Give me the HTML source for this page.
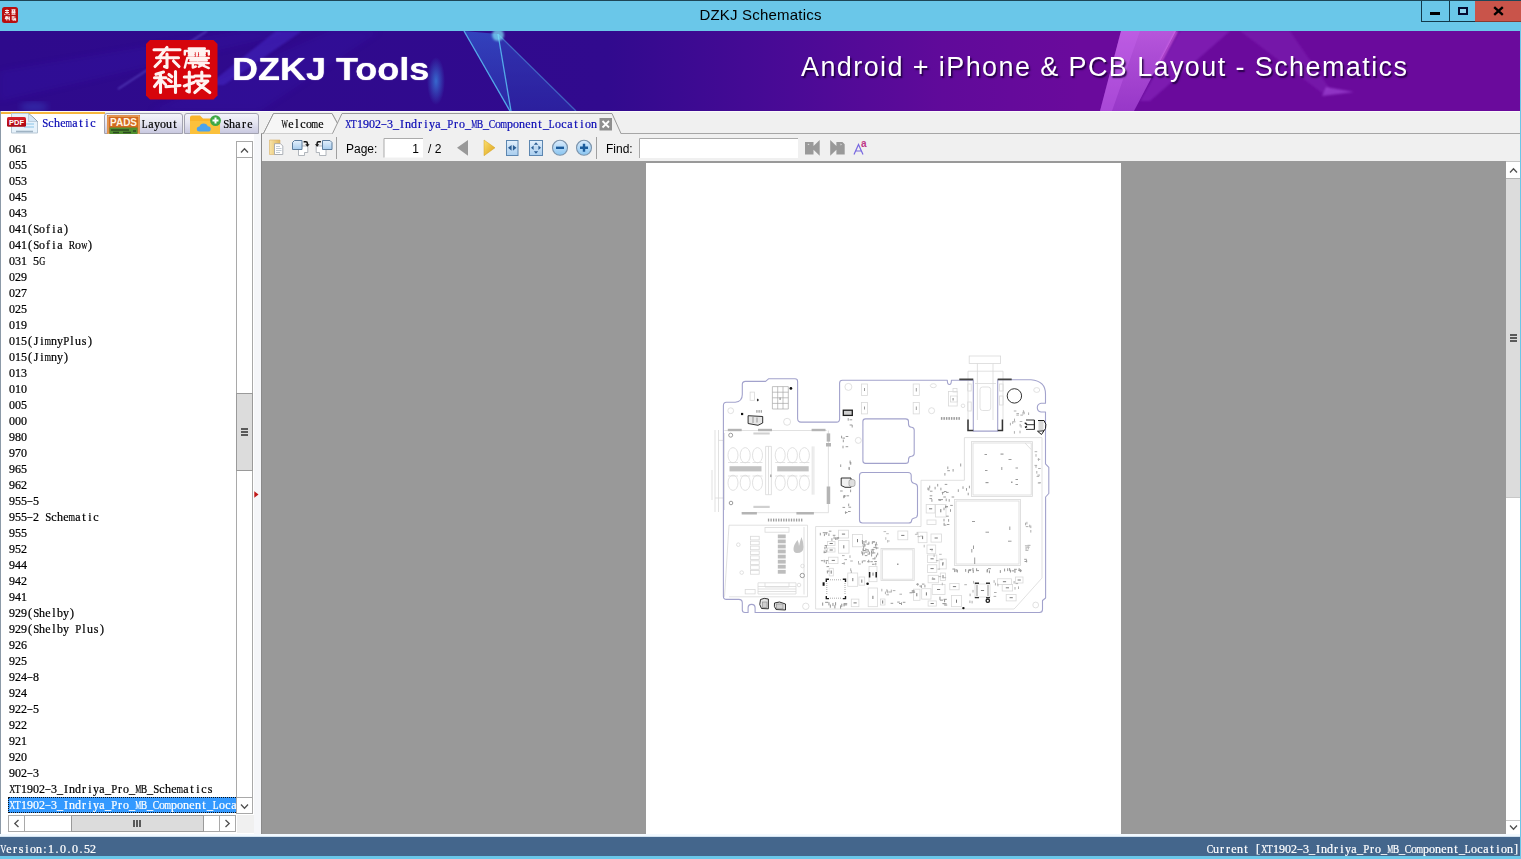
<!DOCTYPE html>
<html>
<head>
<meta charset="utf-8">
<title>DZKJ Schematics</title>
<style>
*{box-sizing:border-box;margin:0;padding:0}
html,body{width:1521px;height:859px;overflow:hidden;background:#6ac7e9;font-family:"Liberation Sans",sans-serif}
.abs{position:absolute}
#win{position:absolute;left:0;top:0;width:1521px;height:859px;background:#6ac7e9;overflow:hidden}
.mono{font-family:"Liberation Serif",serif;font-size:12px;white-space:pre;line-height:16px;opacity:.999;-webkit-text-stroke:.22px currentColor}
.c{display:inline-flex;justify-content:center;width:6px;font-style:normal}
.c b{font-weight:normal;display:block}
.k9{transform:scaleX(.56)}.k7{transform:scaleX(.7)}.k6{transform:scaleX(.8)}.k5{transform:scaleX(.9)}
.dash{position:relative;top:-1px;transform:scaleX(.8)}
/* title bar */
#topline{left:0;top:0;width:1521px;height:1px;background:#1d4657}
#title{opacity:.999;left:0;top:5px;width:1521px;text-align:center;font-size:15px;letter-spacing:.2px;color:#000;line-height:20px}
/* banner */
#banner{left:0;top:31px;width:1520px;height:80px;background:linear-gradient(90deg,#2e0a8c 0%,#310a8e 40%,#4a0a96 52%,#600a9a 62%,#6a0a9c 71%,#6a0a9c 100%);overflow:hidden}
/* client */
#client{left:0;top:111px;width:1520px;height:725px;background:#f0f0f0}
/* left panel */
#lp{left:0;top:111px;width:261px;height:725px;background:#fff;border-left:1px solid #8c9aa8}
#lpborder{left:261px;top:134px;width:1px;height:702px;background:#8a8a8a}
.row{position:absolute;left:9px;height:16px;color:#000}
/* viewer */
#viewer{left:261px;top:161px;width:1245px;height:673px;background:#999}
#page{left:646px;top:163px;width:475px;height:671px;background:#fff}
/* status */
#status{left:0;top:837px;width:1520px;height:19px;background:#44668c}
</style>
</head>
<body>
<div id="win">
<div class="abs" id="topline"></div>
<div class="abs" id="title">DZKJ Schematics</div>

<!-- title icon -->
<div class="abs" style="left:2px;top:7px;width:16px;height:16px;background:#b80f0f;border-radius:2.5px"></div>
<svg class="abs" style="left:2px;top:7px" width="16" height="16" viewBox="0 0 16 16">
<g stroke="#fff" stroke-width="1.1" fill="none" opacity=".92">
<path d="M3 3.5h4M5 2.5v5M3 5.5h4M3.3 7l-.8 .8M6.6 7l.9 .8"/>
<path d="M9.5 2.8h4M9.5 4.2h4M9.5 5.6h4M10.5 2.5v4M12.5 2.5v4M9.5 7.2h4"/>
<path d="M3 10h3.5M4.8 9v4.5M3 12l1.5-1.5M6.5 12l-1.5-1.5M7.3 9.5v4"/>
<path d="M9.5 10h4M11 9v4.5M9.5 12h1.5M12 11.5l2 2M14 11.5l-2.5 2"/>
</g></svg>
<!-- window buttons -->
<div class="abs" style="left:1421px;top:1px;width:29px;height:21px;border:1px solid #12384a;border-top:none;border-right:none"></div>
<div class="abs" style="left:1449px;top:1px;width:27px;height:21px;border:1px solid #12384a;border-top:none;border-right:none"></div>
<div class="abs" style="left:1475px;top:1px;width:46px;height:21px;background:#c9544a;border-bottom:1px solid #8a3a30"></div>
<div class="abs" style="left:1430px;top:12px;width:10px;height:3px;background:#000"></div>
<div class="abs" style="left:1458px;top:7px;width:10px;height:8px;border:2px solid #050a30;border-top-width:2px;background:#8fd4ee"></div>
<svg class="abs" style="left:1493px;top:6px" width="11" height="10" viewBox="0 0 11 10"><path d="M1.2 1.2L9.8 8.8M9.8 1.2L1.2 8.8" stroke="#000" stroke-width="2.4" fill="none"/></svg>

<div class="abs" id="banner">

<svg class="abs" style="left:0;top:0" width="1520" height="80" viewBox="0 0 1520 80">
<defs>
<linearGradient id="beam" x1="0" y1="0" x2="0" y2="1"><stop offset="0" stop-color="#3468dc" stop-opacity=".6"/><stop offset="1" stop-color="#2848c0" stop-opacity=".45"/></linearGradient>
<linearGradient id="pbeam" x1="0" y1="0" x2="0" y2="1"><stop offset="0" stop-color="#d070f0" stop-opacity=".75"/><stop offset="1" stop-color="#b050e0" stop-opacity=".65"/></linearGradient>
<radialGradient id="glow"><stop offset="0" stop-color="#3a9af0" stop-opacity=".65"/><stop offset="1" stop-color="#3a9af0" stop-opacity="0"/></radialGradient>
<filter id="bl1"><feGaussianBlur stdDeviation="1.2"/></filter>
<filter id="bl3"><feGaussianBlur stdDeviation="3"/></filter>
</defs>
<!-- faint left streaks -->
<g filter="url(#bl3)" opacity=".5">
<path d="M0 40L240 0L300 0L0 70Z" fill="#3a22c0" opacity=".3"/>
<path d="M150 80L330 0L380 0L260 80Z" fill="#3a22c0" opacity=".3"/>
</g>
<path d="M276 0L302 0L224 54L208 54Z" fill="#4a2ed0" opacity=".45" filter="url(#bl1)"/>
<path d="M207 0L118 58" stroke="#7a70e8" stroke-width="1.300" opacity=".6" filter="url(#bl1)"/>
<ellipse cx="34" cy="76" rx="14" ry="5" fill="#3a5ad0" opacity=".35" filter="url(#bl3)"/>
<!-- blue beam -->
<path d="M464 0L498 3L576 80L509 80Z" fill="url(#beam)"/>
<path d="M498 3L511 80L576 80Z" fill="#2a0a8a" opacity=".25"/>
<g stroke="#58b8f0" stroke-width="1.3" fill="none" opacity=".9">
<path d="M464 0L510 80"/><path d="M498 3L511 80"/><path d="M498 3L576 80" opacity=".5"/>
</g>
<circle cx="498" cy="4" r="6" fill="#80e8f8" opacity=".7" filter="url(#bl1)"/>
<ellipse cx="436" cy="50" rx="9" ry="24" fill="url(#glow)"/>
<!-- purple beams -->
<path d="M1121 0L1176 0L1134 80L1100 80Z" fill="url(#pbeam)"/>
<path d="M1121 0L1140 0L1112 80L1100 80Z" fill="#c868f0" opacity=".35"/>
<path d="M1177 0L1158 36" stroke="#f080f8" stroke-width="2" opacity=".75" filter="url(#bl1)"/>
<g filter="url(#bl1)">
<path d="M1180 0L1230 0L1150 70L1140 70Z" fill="#a040d8" opacity=".35"/>
<path d="M1240 0L1290 0L1330 58L1322 62Z" fill="#9838d0" opacity=".25"/>
<path d="M1326 56L1354 61L1322 65Z" fill="#a850e0" opacity=".6"/>
</g>
<!-- logo -->
<path d="M150 9h63.5l4 4v51.5l-4 4h-63.5l-4-4v-51.5z" fill="#d6050c"/>
<g stroke="#fff2f0" stroke-width="3.1" stroke-linecap="round" stroke-linejoin="round" fill="none">
<g transform="translate(154,16.5)">
<path d="M0 2.2h26M13 0L5 10M2.5 10.2h22M13 6.5v13.5l-2.5-1M6.5 13.5L1 19M19.5 13.5L25 19"/>
</g>
<g transform="translate(183.8,16.5)" stroke-width="2.4">
<path d="M5 1h16M1 7v-3.5h24v3.5M13 1v7M5 5.7h5M16 5.7h5M5 8h5M16 8h5"/>
<path d="M3.5 10.5h21.500M3.500 10.500L1 20M6.500 13h16.500M4.500 15.600h20.500M9 15.600v4.400l3-1M14 15.600l11 5M20 16.800l-5 2.400"/>
</g>
<g transform="translate(154,40.500)">
<path d="M9.500 0.500L2 2.800M0.500 6.200h11.500M6.500 2.500v18.500M6.500 7.500L0.500 15M7 8.500l4.500 4.500M15 3l2.800 2.300M14.500 8l2.800 2.300M12 15.300l14-1.300M21.500 0v21"/>
</g>
<g transform="translate(183.800,40.500)">
<path d="M0.500 5.500h9.500M5.500 0.500v20l-2.500-1.200M0.500 14.500l9.500-3.500M11 4.500h15M18 0.500v8.500M12 9.500h12L11 21M14 12l12 9"/>
</g>
</g>
</svg>
<div class="abs" style="left:232px;top:18px;font-size:32px;font-weight:700;color:#fff;opacity:.999;letter-spacing:0;transform:scaleX(1.125);transform-origin:0 0;line-height:40px;white-space:pre;text-shadow:0 0 1px #fff">DZKJ Tools</div>
<div class="abs" style="left:801px;top:18px;font-size:27px;color:#fff;opacity:.999;letter-spacing:1.4px;line-height:36px;white-space:pre;text-shadow:1.5px 1.500px 1.500px rgba(30,0,60,.9)">Android + iPhone &amp; PCB Layout - Schematics</div>

</div>
<div class="abs" id="client"></div>
<div class="abs" id="lp"></div>

<!-- left tab strip -->
<div class="abs" style="left:1px;top:111px;width:260px;height:23px;background:#f0f0f0"></div>
<div class="abs" style="left:1px;top:111px;width:1519px;height:1px;background:#fafafa"></div>
<div class="abs" style="left:1px;top:112px;width:104px;height:22px;background:#fff;border-top:2px solid #f6b63c"></div>
<svg class="abs" style="left:5px;top:112px" width="36" height="23" viewBox="0 0 36 23">
<defs><linearGradient id="pdfg" x1="0" y1="0" x2="0" y2="1"><stop offset="0" stop-color="#d8202c"/><stop offset=".5" stop-color="#c0101c"/><stop offset="1" stop-color="#a80814"/></linearGradient></defs>
<path d="M6.500 1.500H23.500L32.500 9.500V21H6.500Z" fill="#e6f2fb" stroke="#b7c7d4" stroke-width="1"/>
<path d="M23.500 1.500L32.500 9.500" stroke="#5a6a78" stroke-width="1"/>
<path d="M23.500 1.500V9.500H32.500" fill="#d2e6f6" stroke="#b4c8d8" stroke-width=".8"/>
<path d="M19 12h10M19 15h10" stroke="#a8d4f0" stroke-width="1.600"/>
<path d="M11 19.500H28" stroke="#9fb3c3" stroke-width="1.600"/>
<rect x="2" y="5" width="19" height="9.800" rx="1.600" fill="url(#pdfg)"/>
<text x="11.500" y="12.600" font-family="Liberation Sans" font-weight="700" font-size="8" fill="#fff" text-anchor="middle" textLength="15" lengthAdjust="spacingAndGlyphs">PDF</text>
</svg>
<div class="abs mono" style="left:42px;top:115px;color:#0a0ab4"><i class="c"><b class="k5">S</b></i><i class="c">c</i><i class="c">h</i><i class="c">e</i><i class="c"><b class="k7">m</b></i><i class="c">a</i><i class="c">t</i><i class="c">i</i><i class="c">c</i></div>
<!-- Layout tab -->
<div class="abs" style="left:104px;top:113px;width:79px;height:21px;border:1px solid #a2a2b0;border-radius:3px 3px 0 0;background:linear-gradient(180deg,#f4f4fa 0,#e6e6f2 45%,#c9c9e0 100%)"></div>
<svg class="abs" style="left:107px;top:115px" width="33" height="19" viewBox="0 0 33 19">
<rect x="0" y="0" width="33" height="19" fill="#d2691e"/>
<rect x="1" y="1" width="31" height="18" fill="none" stroke="#f0c080" stroke-width="1"/>
<rect x="2.500" y="12.500" width="28" height="6.500" fill="#4f8f2f"/>
<path d="M4 15h18M6 17.500h6M16 17.500h8M26 16h3" stroke="#2c4a22" stroke-width="1.500"/>
<text x="16.500" y="10.800" font-family="Liberation Sans" font-weight="700" font-size="11" fill="#fff4e0" text-anchor="middle" textLength="27" lengthAdjust="spacingAndGlyphs">PADS</text>
</svg>
<div class="abs mono" style="left:142px;top:116px;color:#000"><i class="c"><b class="k6">L</b></i><i class="c">a</i><i class="c">y</i><i class="c">o</i><i class="c">u</i><i class="c">t</i></div>
<!-- Share tab -->
<div class="abs" style="left:184px;top:113px;width:75px;height:21px;border:1px solid #a2a2b0;border-radius:3px 3px 0 0;background:linear-gradient(180deg,#f4f4fa 0,#e6e6f2 45%,#c9c9e0 100%)"></div>
<svg class="abs" style="left:188px;top:113px" width="36" height="21" viewBox="0 0 36 21">
<path d="M2 4.500q0-2 2-2h8l3 3h15q2 0 2 2V21H2Z" fill="#f9b42a"/>
<path d="M2 8h30v13H2Z" fill="#fbc13c"/>
<path d="M11.500 18.500q-2.700 0-2.700-2.500 0-2.300 2.700-2.500.900-3 4.100-3 3.200 0 4.100 2.700 3 .2 3 2.700 0 2.600-2.800 2.600Z" fill="#4aa3ee"/>
<circle cx="27.500" cy="7.600" r="5.400" fill="#3fa845"/>
<path d="M27.500 4.600v6M24.500 7.600h6" stroke="#fff" stroke-width="2"/>
</svg>
<div class="abs mono" style="left:223px;top:116px;color:#000"><i class="c"><b class="k5">S</b></i><i class="c">h</i><i class="c">a</i><i class="c">r</i><i class="c">e</i></div>
<!-- doc tabs -->
<svg class="abs" style="left:261px;top:111px" width="1259" height="24" viewBox="0 0 1259 24">
<path d="M0 22.500H1259" stroke="#a6a6a6" stroke-width="1"/>
<path d="M2.500 22.500L12.500 2.500H71L76.500 12.500" fill="#f6f6f6" stroke="#9a9a9a" stroke-width="1"/>
<path d="M2.500 22.500L12.500 2.500H71L76.500 12.500L71.500 22.500Z" fill="#f6f6f6" stroke="none"/>
<path d="M2.500 22.500L12.500 2.500H71L76.500 12.500" fill="none" stroke="#9a9a9a" stroke-width="1"/>
<path d="M71.500 23L81 2.500H351L360 23Z" fill="#f0f0f0"/>
<path d="M71.500 22.500L81 2.500H351L360 22.500" fill="none" stroke="#9a9a9a" stroke-width="1"/>
<rect x="338.500" y="7" width="12.500" height="12.500" fill="#8f8f8f"/>
<path d="M341.500 10l6.500 6.500M348 10l-6.500 6.500" stroke="#fff" stroke-width="1.800"/>
</svg>
<div class="abs mono" style="left:282px;top:116px;color:#000"><i class="c"><b class="k9">W</b></i><i class="c">e</i><i class="c">l</i><i class="c">c</i><i class="c">o</i><i class="c"><b class="k7">m</b></i><i class="c">e</i></div>
<div class="abs mono" style="left:345px;top:116px;color:#0a0ab4"><i class="c"><b class="k7">X</b></i><i class="c"><b class="k6">T</b></i>1902<i class="c"><b class="dash">–</b></i>3<i class="c">_</i><i class="c">I</i><i class="c">n</i><i class="c">d</i><i class="c">r</i><i class="c">i</i><i class="c">y</i><i class="c">a</i><i class="c">_</i><i class="c"><b class="k5">P</b></i><i class="c">r</i><i class="c">o</i><i class="c">_</i><i class="c"><b class="k9">M</b></i><i class="c"><b class="k6">B</b></i><i class="c">_</i><i class="c"><b class="k6">C</b></i><i class="c">o</i><i class="c"><b class="k7">m</b></i><i class="c">p</i><i class="c">o</i><i class="c">n</i><i class="c">e</i><i class="c">n</i><i class="c">t</i><i class="c">_</i><i class="c"><b class="k6">L</b></i><i class="c">o</i><i class="c">c</i><i class="c">a</i><i class="c">t</i><i class="c">i</i><i class="c">o</i><i class="c">n</i></div>

<!-- list -->
<div class="abs" style="left:8px;top:141px;width:228px;height:673px;overflow:hidden">
<div class="abs mono" style="left:1px;top:0px;color:#000">061</div>
<div class="abs mono" style="left:1px;top:16px;color:#000">055</div>
<div class="abs mono" style="left:1px;top:32px;color:#000">053</div>
<div class="abs mono" style="left:1px;top:48px;color:#000">045</div>
<div class="abs mono" style="left:1px;top:64px;color:#000">043</div>
<div class="abs mono" style="left:1px;top:80px;color:#000">041<i class="c">(</i><i class="c"><b class="k5">S</b></i><i class="c">o</i><i class="c">f</i><i class="c">i</i><i class="c">a</i><i class="c">)</i></div>
<div class="abs mono" style="left:1px;top:96px;color:#000">041<i class="c">(</i><i class="c"><b class="k5">S</b></i><i class="c">o</i><i class="c">f</i><i class="c">i</i><i class="c">a</i><i class="c"> </i><i class="c"><b class="k6">R</b></i><i class="c">o</i><i class="c"><b class="k7">w</b></i><i class="c">)</i></div>
<div class="abs mono" style="left:1px;top:112px;color:#000">031<i class="c"> </i>5<i class="c"><b class="k7">G</b></i></div>
<div class="abs mono" style="left:1px;top:128px;color:#000">029</div>
<div class="abs mono" style="left:1px;top:144px;color:#000">027</div>
<div class="abs mono" style="left:1px;top:160px;color:#000">025</div>
<div class="abs mono" style="left:1px;top:176px;color:#000">019</div>
<div class="abs mono" style="left:1px;top:192px;color:#000">015<i class="c">(</i><i class="c">J</i><i class="c">i</i><i class="c"><b class="k7">m</b></i><i class="c">n</i><i class="c">y</i><i class="c"><b class="k5">P</b></i><i class="c">l</i><i class="c">u</i><i class="c">s</i><i class="c">)</i></div>
<div class="abs mono" style="left:1px;top:208px;color:#000">015<i class="c">(</i><i class="c">J</i><i class="c">i</i><i class="c"><b class="k7">m</b></i><i class="c">n</i><i class="c">y</i><i class="c">)</i></div>
<div class="abs mono" style="left:1px;top:224px;color:#000">013</div>
<div class="abs mono" style="left:1px;top:240px;color:#000">010</div>
<div class="abs mono" style="left:1px;top:256px;color:#000">005</div>
<div class="abs mono" style="left:1px;top:272px;color:#000">000</div>
<div class="abs mono" style="left:1px;top:288px;color:#000">980</div>
<div class="abs mono" style="left:1px;top:304px;color:#000">970</div>
<div class="abs mono" style="left:1px;top:320px;color:#000">965</div>
<div class="abs mono" style="left:1px;top:336px;color:#000">962</div>
<div class="abs mono" style="left:1px;top:352px;color:#000">955<i class="c"><b class="dash">–</b></i>5</div>
<div class="abs mono" style="left:1px;top:368px;color:#000">955<i class="c"><b class="dash">–</b></i>2<i class="c"> </i><i class="c"><b class="k5">S</b></i><i class="c">c</i><i class="c">h</i><i class="c">e</i><i class="c"><b class="k7">m</b></i><i class="c">a</i><i class="c">t</i><i class="c">i</i><i class="c">c</i></div>
<div class="abs mono" style="left:1px;top:384px;color:#000">955</div>
<div class="abs mono" style="left:1px;top:400px;color:#000">952</div>
<div class="abs mono" style="left:1px;top:416px;color:#000">944</div>
<div class="abs mono" style="left:1px;top:432px;color:#000">942</div>
<div class="abs mono" style="left:1px;top:448px;color:#000">941</div>
<div class="abs mono" style="left:1px;top:464px;color:#000">929<i class="c">(</i><i class="c"><b class="k5">S</b></i><i class="c">h</i><i class="c">e</i><i class="c">l</i><i class="c">b</i><i class="c">y</i><i class="c">)</i></div>
<div class="abs mono" style="left:1px;top:480px;color:#000">929<i class="c">(</i><i class="c"><b class="k5">S</b></i><i class="c">h</i><i class="c">e</i><i class="c">l</i><i class="c">b</i><i class="c">y</i><i class="c"> </i><i class="c"><b class="k5">P</b></i><i class="c">l</i><i class="c">u</i><i class="c">s</i><i class="c">)</i></div>
<div class="abs mono" style="left:1px;top:496px;color:#000">926</div>
<div class="abs mono" style="left:1px;top:512px;color:#000">925</div>
<div class="abs mono" style="left:1px;top:528px;color:#000">924<i class="c"><b class="dash">–</b></i>8</div>
<div class="abs mono" style="left:1px;top:544px;color:#000">924</div>
<div class="abs mono" style="left:1px;top:560px;color:#000">922<i class="c"><b class="dash">–</b></i>5</div>
<div class="abs mono" style="left:1px;top:576px;color:#000">922</div>
<div class="abs mono" style="left:1px;top:592px;color:#000">921</div>
<div class="abs mono" style="left:1px;top:608px;color:#000">920</div>
<div class="abs mono" style="left:1px;top:624px;color:#000">902<i class="c"><b class="dash">–</b></i>3</div>
<div class="abs mono" style="left:1px;top:640px;color:#000"><i class="c"><b class="k7">X</b></i><i class="c"><b class="k6">T</b></i>1902<i class="c"><b class="dash">–</b></i>3<i class="c">_</i><i class="c">I</i><i class="c">n</i><i class="c">d</i><i class="c">r</i><i class="c">i</i><i class="c">y</i><i class="c">a</i><i class="c">_</i><i class="c"><b class="k5">P</b></i><i class="c">r</i><i class="c">o</i><i class="c">_</i><i class="c"><b class="k9">M</b></i><i class="c"><b class="k6">B</b></i><i class="c">_</i><i class="c"><b class="k5">S</b></i><i class="c">c</i><i class="c">h</i><i class="c">e</i><i class="c"><b class="k7">m</b></i><i class="c">a</i><i class="c">t</i><i class="c">i</i><i class="c">c</i><i class="c">s</i></div>
<div class="abs" style="left:0;top:656px;width:260px;height:16px;background:#3399ff;outline:1px dotted #111;outline-offset:-1px"></div>
<div class="abs mono" style="left:1px;top:656px;color:#fff"><i class="c"><b class="k7">X</b></i><i class="c"><b class="k6">T</b></i>1902<i class="c"><b class="dash">–</b></i>3<i class="c">_</i><i class="c">I</i><i class="c">n</i><i class="c">d</i><i class="c">r</i><i class="c">i</i><i class="c">y</i><i class="c">a</i><i class="c">_</i><i class="c"><b class="k5">P</b></i><i class="c">r</i><i class="c">o</i><i class="c">_</i><i class="c"><b class="k9">M</b></i><i class="c"><b class="k6">B</b></i><i class="c">_</i><i class="c"><b class="k6">C</b></i><i class="c">o</i><i class="c"><b class="k7">m</b></i><i class="c">p</i><i class="c">o</i><i class="c">n</i><i class="c">e</i><i class="c">n</i><i class="c">t</i><i class="c">_</i><i class="c"><b class="k6">L</b></i><i class="c">o</i><i class="c">c</i><i class="c">a</i><i class="c">t</i><i class="c">i</i><i class="c">o</i><i class="c">n</i></div>
</div>
<!-- list vscroll -->
<div class="abs" style="left:236px;top:141px;width:17px;height:673px;background:#fff;border:1px solid #a9a9a9"></div>
<div class="abs" style="left:236px;top:141px;width:17px;height:17px;border:1px solid #a9a9a9;background:#fff"></div>
<svg class="abs" style="left:240px;top:147px" width="9" height="7" viewBox="0 0 9 7"><path d="M1 5.500L4.500 1.800L8 5.500" fill="none" stroke="#505050" stroke-width="1.300"/></svg>
<div class="abs" style="left:236px;top:393px;width:17px;height:78px;background:#dcdcdc;border:1px solid #9a9a9a"></div>
<div class="abs" style="left:241px;top:428px;width:7px;height:2px;background:#5a5a5a;box-shadow:0 3px 0 #5a5a5a,0 6px 0 #5a5a5a"></div>
<div class="abs" style="left:236px;top:797px;width:17px;height:17px;border:1px solid #a9a9a9;background:#fff"></div>
<svg class="abs" style="left:240px;top:803px" width="9" height="7" viewBox="0 0 9 7"><path d="M1 1.500L4.500 5.200L8 1.500" fill="none" stroke="#505050" stroke-width="1.300"/></svg>
<!-- list hscroll -->
<div class="abs" style="left:8px;top:815px;width:228px;height:17px;background:#fff;border:1px solid #a9a9a9"></div>
<div class="abs" style="left:8px;top:815px;width:17px;height:17px;border:1px solid #a9a9a9;background:#fff"></div>
<svg class="abs" style="left:13px;top:819px" width="7" height="9" viewBox="0 0 7 9"><path d="M5.500 1L1.800 4.500L5.500 8" fill="none" stroke="#505050" stroke-width="1.300"/></svg>
<div class="abs" style="left:71px;top:815px;width:133px;height:17px;background:#dcdcdc;border:1px solid #9a9a9a"></div>
<div class="abs" style="left:133px;top:820px;width:2px;height:7px;background:#5a5a5a;box-shadow:3px 0 0 #5a5a5a,6px 0 0 #5a5a5a"></div>
<div class="abs" style="left:219px;top:815px;width:17px;height:17px;border:1px solid #a9a9a9;background:#fff"></div>
<svg class="abs" style="left:224px;top:819px" width="7" height="9" viewBox="0 0 7 9"><path d="M1.500 1L5.200 4.500L1.500 8" fill="none" stroke="#505050" stroke-width="1.300"/></svg>
<div class="abs" style="left:237px;top:815px;width:17px;height:18px;background:#f0f0f0"></div>
<!-- splitter -->
<div class="abs" style="left:254px;top:134px;width:7px;height:702px;background:#f5f6f9"></div>
<svg class="abs" style="left:254px;top:491px" width="5" height="7" viewBox="0 0 5 7"><path d="M0.300 0.300L4.500 3.500L0.300 6.700Z" fill="#c01818"/></svg>


<!-- toolbar -->
<div class="abs" style="left:262px;top:134px;width:1258px;height:27px;background:#f0f0f0"></div>
<svg class="abs" style="left:262px;top:134px" width="620" height="27" viewBox="0 0 620 27">
<defs>
<linearGradient id="tan" x1="0" y1="0" x2="1" y2="0"><stop offset="0" stop-color="#f8e4a8"/><stop offset="1" stop-color="#e0b860"/></linearGradient>
<linearGradient id="pgb" x1="0" y1="0" x2="0" y2="1"><stop offset="0" stop-color="#e4f0fc"/><stop offset="1" stop-color="#a8cdee"/></linearGradient>
<linearGradient id="gold" x1="0" y1="0" x2="1" y2="1"><stop offset="0" stop-color="#fbe070"/><stop offset="1" stop-color="#dca018"/></linearGradient>
<linearGradient id="zb" x1="0" y1="0" x2="0" y2="1"><stop offset="0" stop-color="#dcecfc"/><stop offset="1" stop-color="#88c4f0"/></linearGradient>
</defs>
<!-- copy -->
<path d="M7.500 6h10.500v14.500h-10.500z" fill="url(#tan)" stroke="#d8b068" stroke-width=".6"/>
<path d="M12.500 9.700h6l2.300 2.300v8.500h-8.300z" fill="#fff" stroke="#9aa0a8" stroke-width=".8"/>
<path d="M14 12.500h4M14 14.500h5.500M14 16.500h5.500M14 18.500h4" stroke="#b4c0cc" stroke-width=".8"/>
<!-- rotate right -->
<path d="M36.500 12H45.800V18.500H42.500V21.500H36.500Z" fill="#fff" stroke="#a8aeb4" stroke-width=".9"/>
<path d="M32.500 6.500H40V15.500H30.500V8.500Z" fill="url(#pgb)" stroke="#5c7c9c" stroke-width="1"/>
<path d="M41.600 7.800h2.200q1.600 0 1.600 1.500v1.400" fill="none" stroke="#111" stroke-width="1.500"/>
<path d="M43.200 10.200h4.400l-2.200 2.500z" fill="#111"/>
<!-- rotate left -->
<path d="M64 12H54.200V18.500H57.500V21.500H64Z" fill="#fff" stroke="#a8aeb4" stroke-width=".9"/>
<path d="M60.500 6.500H68L70 8.500V15.500H60.500Z" fill="url(#pgb)" stroke="#5c7c9c" stroke-width="1"/>
<path d="M58.900 7.800h-2.200q-1.600 0-1.600 1.500v1.400" fill="none" stroke="#111" stroke-width="1.500"/>
<path d="M57.300 10.200h-4.400l2.200 2.500z" fill="#111"/>
<path d="M74.500 3V25" stroke="#a0a0a0" stroke-width="1"/>
<!-- page input -->
<rect x="122" y="4.500" width="39" height="19" fill="#fff"/>
<path d="M122 23.500V4.500H161" fill="none" stroke="#ababab" stroke-width="1"/>
<!-- prev / next -->
<path d="M195 13.800L206 6V21.700z" fill="#999"/>
<path d="M222 6L233 13.800L222 21.700z" fill="url(#gold)" stroke="#d4a020" stroke-width=".5"/>
<!-- fit width -->
<rect x="244.500" y="6.500" width="11.500" height="15" fill="url(#pgb)" stroke="#5c86b0" stroke-width="1"/>
<path d="M246 13.800l3.600-2.900v5.800zM254.500 13.800l-3.600-2.900v5.800z" fill="#2c5e94"/>
<!-- fit page -->
<rect x="267.500" y="6.500" width="13" height="15" fill="url(#pgb)" stroke="#5c86b0" stroke-width="1"/>
<path d="M269 13.800l2.600-2.200v4.400zM279 13.800l-2.600-2.200v4.400zM274 8.300l2.200 2.400h-4.400zM274 19.700l2.200-2.400h-4.400z" fill="#2c5e94"/>
<circle cx="274" cy="14" r="2" fill="#c0d8f0"/>
<!-- zoom out / in -->
<circle cx="298" cy="13.800" r="7.500" fill="url(#zb)" stroke="#7c94ac" stroke-width="1.100"/>
<path d="M294 13.800h8" stroke="#1c5c9c" stroke-width="2.400"/>
<circle cx="322" cy="13.800" r="7.500" fill="url(#zb)" stroke="#7c94ac" stroke-width="1.100"/>
<path d="M318 13.800h8M322 9.800v8" stroke="#1c5c9c" stroke-width="2.400"/>
<path d="M334.500 3V25" stroke="#a0a0a0" stroke-width="1"/>
<!-- find input -->
<rect x="377.500" y="4.500" width="158.500" height="19.500" fill="#fff"/>
<path d="M377.500 24V4.500H536" fill="none" stroke="#ababab" stroke-width="1"/>
<!-- find prev / next -->
<path d="M543 8h8.500v4l6.200-6v15.800l-6.200-6v4.700h-8.500z" fill="#999"/>
<path d="M546.500 9.500l1 1.500h-2z" fill="#ddd"/>
<path d="M568.200 6l6.200 6v-4h6l2.300 2.300v10.200h-8.300v-4.700l-6.200 6z" fill="#999"/>
<path d="M578.500 9.500l1.500 1l-1.500 1z" fill="#ddd"/>
<!-- Aa -->
<path d="M592 20.500l4.500-10l4.500 10M593.800 17h5.600" fill="none" stroke="#7868e0" stroke-width="1.200"/>
<text x="599" y="13" font-family="Liberation Sans, sans-serif" font-weight="700" font-size="10" fill="#c03888">a</text>
</svg>
<div class="abs" style="left:346px;top:142px;font-size:12px;line-height:14px;color:#000;opacity:.999;white-space:pre">Page:</div>
<div class="abs" style="left:385px;top:142px;width:34px;font-size:12px;line-height:14px;color:#000;opacity:.999;text-align:right">1</div>
<div class="abs" style="left:428px;top:142px;font-size:12px;line-height:14px;color:#000;opacity:.999;white-space:pre">/ 2</div>
<div class="abs" style="left:606px;top:142px;font-size:12px;line-height:14px;color:#000;opacity:.999;white-space:pre">Find:</div>

<div class="abs" id="viewer"></div>
<div class="abs" id="page"></div>
<svg class="abs" style="left:700px;top:340px;filter:blur(.3px)" width="370" height="290" viewBox="700 340 370 290">
<g fill="none" stroke="#d9d9d9" stroke-width=".8">
<rect x="969.2" y="356" width="31.400" height="7.500"/>
<path d="M977.400 363.500V420M993 363.500V420M968 371.200H1003M968 371.200V431M1003 371.200V431M975 383.500H996"/>
<rect x="980" y="387" width="10.700" height="23.500" rx="2.500"/>
<rect x="967.700" y="384" width="3.500" height="7"/><rect x="967.700" y="402" width="3.500" height="9"/><rect x="999.600" y="384" width="3.500" height="7"/><rect x="999.600" y="396" width="3.500" height="9"/>
<path d="M815.600 609V526.500H921V480.300H964.400V437.600H1042V578L1016 607L1014 609Z"/>
<rect x="971.600" y="441.600" width="61" height="54.800"/><rect x="973" y="443" width="58.200" height="52"/>
<path d="M1025 443L1031.200 449.500"/>
<rect x="954.500" y="499.500" width="66" height="66"/><rect x="956" y="501" width="63" height="63"/>
<rect x="881" y="548.500" width="33.200" height="32"/><rect x="882.300" y="549.800" width="30.600" height="29.400"/>
<path d="M724.300 430.500H826.700M828.400 430.500V512.700H741.700M724.300 433V510"/>
<path d="M715 430V512M718.500 430V512M712 470V500M718.500 440.400H723M715 498H723"/>
<ellipse cx="733" cy="455.200" rx="5" ry="7.600"/><ellipse cx="733" cy="482.800" rx="5" ry="7.600"/>
<path d="M728 462.500H738M728 476H738"/>
<ellipse cx="745.2" cy="455.200" rx="5" ry="7.600"/><ellipse cx="745.2" cy="482.800" rx="5" ry="7.600"/>
<path d="M740.2 462.500H750.2M740.2 476H750.2"/>
<ellipse cx="757.5" cy="455.200" rx="5" ry="7.600"/><ellipse cx="757.5" cy="482.800" rx="5" ry="7.600"/>
<path d="M752.5 462.500H762.5M752.5 476H762.5"/>
<ellipse cx="780.2" cy="455.200" rx="5" ry="7.600"/><ellipse cx="780.2" cy="482.800" rx="5" ry="7.600"/>
<path d="M775.2 462.500H785.2M775.2 476H785.2"/>
<ellipse cx="792.4" cy="455.200" rx="5" ry="7.600"/><ellipse cx="792.4" cy="482.800" rx="5" ry="7.600"/>
<path d="M787.4 462.500H797.4M787.4 476H797.4"/>
<ellipse cx="804.4" cy="455.200" rx="5" ry="7.600"/><ellipse cx="804.4" cy="482.800" rx="5" ry="7.600"/>
<path d="M799.4 462.500H809.4M799.4 476H809.4"/>
<path d="M765.600 446.400V494.700M768.500 446.400V494.700M771.400 446.400V494.700M765.600 446.400H771.400M765.600 494.700H771.400M812.200 446.400V494.700M813.900 446.400V494.700"/>
<path d="M729 525.200H807.500V596.800H729M729 525.200L724.500 596.800M804 527V594.500"/>
<rect x="765" y="527.600" width="24" height="4.600"/>
<path d="M758 582.800H796V594H758ZM758 586.500H796M758 589H796M758 591.500H796M765 582.800V587H789V582.800"/>
<rect x="750.500" y="536.3" width="8.700" height="3.600"/>
<rect x="750.500" y="541.2" width="8.700" height="3.600"/>
<rect x="750.500" y="546.1" width="8.700" height="3.600"/>
<rect x="750.500" y="551.0" width="8.700" height="3.600"/>
<rect x="750.500" y="555.9" width="8.700" height="3.600"/>
<rect x="750.500" y="560.8" width="8.700" height="3.600"/>
<rect x="750.500" y="565.7" width="8.700" height="3.600"/>
<rect x="750.500" y="570.6" width="8.700" height="3.600"/>
<rect x="745.200" y="589.600" width="9.900" height="4.300"/>
<circle cx="738.300" cy="544.700" r="1.800"/><circle cx="741.700" cy="572.600" r="1.800"/><circle cx="802.500" cy="566" r="1.800"/><circle cx="799" cy="585" r="1.800"/><circle cx="805.800" cy="606.300" r="3.200"/>
<circle cx="730.700" cy="410.700" r="2.900"/><circle cx="787.100" cy="421.800" r="3.500"/><circle cx="848.400" cy="386.900" r="3.500"/><ellipse cx="933.300" cy="385.700" rx="3" ry="2"/><circle cx="931.600" cy="410.700" r="3"/><circle cx="963" cy="405.800" r="1.800"/><circle cx="858.300" cy="440.400" r="3"/><ellipse cx="1036.700" cy="390" rx="3" ry="2.400"/><circle cx="1035.700" cy="605" r="2.900"/>
<rect x="750.100" y="392.100" width="4.400" height="8.200"/>
<rect x="948.500" y="391.500" width="8.700" height="14.500"/><rect x="950.500" y="396" width="6.700" height="6"/>
<rect x="861.5" y="384" width="6.100" height="11.500"/>
<rect x="861.5" y="402.4" width="6.100" height="11.500"/>
<rect x="913.2" y="384" width="6.100" height="11.500"/>
<rect x="913.2" y="402.4" width="6.100" height="11.500"/>
<rect x="838.5" y="530.2" width="9.9" height="7.8"/>
<rect x="852.5" y="534.5" width="9.9" height="12.3"/>
<rect x="838.5" y="540.4" width="10.5" height="12.8"/>
<rect x="827.5" y="541.5" width="7.5" height="4.1"/>
<rect x="827.5" y="548" width="7.5" height="4.0"/>
<rect x="828.6" y="557.2" width="9.4" height="6.4"/>
<rect x="829.2" y="568.3" width="4.1" height="7.6"/>
<rect x="847.8" y="573" width="9.9" height="13.3"/>
<rect x="858.9" y="577" width="5.8" height="8.2"/>
<rect x="897.9" y="531" width="9.9" height="8.8"/>
<rect x="918.2" y="532.2" width="8.8" height="10.5"/>
<rect x="931" y="534" width="10.5" height="8.1"/>
<rect x="927" y="545" width="8.7" height="8.7"/>
<rect x="927.5" y="555" width="9.3" height="7.5"/>
<rect x="927.5" y="564.8" width="9.3" height="7.6"/>
<rect x="928.1" y="575.3" width="10.5" height="7.5"/>
<rect x="939.2" y="559" width="7.0" height="9.9"/>
<rect x="940.3" y="573" width="5.3" height="7.5"/>
<rect x="932.2" y="584.6" width="12.8" height="9.9"/>
<rect x="921.7" y="588.7" width="9.3" height="10.4"/>
<rect x="913.6" y="589.2" width="6.4" height="11.1"/>
<rect x="928.1" y="600.9" width="8.2" height="5.2"/>
<rect x="868.2" y="588" width="9.3" height="18.7"/>
<rect x="880.4" y="599" width="4.6" height="6.0"/>
<rect x="851.3" y="599.1" width="7.6" height="7.6"/>
<rect x="869" y="566.5" width="8.0" height="15.2"/>
<rect x="949.8" y="583.4" width="9.3" height="6.4"/>
<rect x="951.5" y="595.6" width="9.9" height="11.1"/>
<rect x="997.5" y="578.8" width="14.0" height="5.8"/>
<rect x="1002.2" y="584.6" width="10.4" height="6.4"/>
<rect x="1006.2" y="594.5" width="9.9" height="6.4"/>
<rect x="1015.5" y="577" width="7.5" height="6.0"/>
<rect x="975" y="584" width="15.0" height="13.0"/>
<rect x="926.2" y="504.5" width="8.8" height="8.5"/>
<rect x="935.5" y="504.5" width="10.5" height="12.5"/>
<rect x="927" y="520" width="9.0" height="4.5"/>
<rect x="953" y="388.5" width="4.0" height="3.5"/>
</g>
<g stroke="#7a7a7a" stroke-width="1" fill="none">
<path d="M841.9 534.1h3.200"/>
<path d="M857.5 539.0v3.200"/>
<path d="M843.8 545.2v3.200"/>
<path d="M829.6 543.5h3.200"/>
<path d="M829.6 550.0h3.200"/>
<path d="M831.7 560.4h3.200"/>
<path d="M831.2 570.5v3.200"/>
<path d="M852.8 578.0v3.200"/>
<path d="M861.8 579.5v3.200"/>
<path d="M901.2 535.4h3.200"/>
<path d="M922.6 535.9v3.200"/>
<path d="M934.6 538.0h3.200"/>
<path d="M929.8 549.4h3.200"/>
<path d="M930.5 558.8h3.200"/>
<path d="M930.5 568.6h3.200"/>
<path d="M931.8 579.0h3.200"/>
<path d="M942.7 562.4v3.200"/>
<path d="M943.0 575.1v3.200"/>
<path d="M937.0 589.5h3.200"/>
<path d="M926.4 592.3v3.200"/>
<path d="M916.8 593.1v3.200"/>
<path d="M930.6 603.5h3.200"/>
<path d="M872.9 595.8v3.200"/>
<path d="M882.7 600.4v3.200"/>
<path d="M853.5 602.9h3.200"/>
<path d="M873.0 572.5v3.200"/>
<path d="M952.9 586.6h3.200"/>
<path d="M956.5 599.6v3.200"/>
<path d="M1002.9 581.7h3.200"/>
<path d="M1005.8 587.8h3.200"/>
<path d="M1009.6 597.7h3.200"/>
<path d="M1017.6 580.0h3.200"/>
<path d="M980.9 590.5h3.200"/>
<path d="M929.0 508.8h3.200"/>
<path d="M940.8 509.1v3.200"/>
</g>
<g fill="#b4b4b4" stroke="none">
<rect x="727.8" y="428.800" width="13.9" height="2.400"/>
<rect x="758" y="428.800" width="14.0" height="2.400"/>
<rect x="811.6" y="428.800" width="13.9" height="2.400"/>
<rect x="741.700" y="512" width="15.200" height="2.500"/><rect x="796.400" y="512" width="17.500" height="2.500"/>
<rect x="826.700" y="433.400" width="3.500" height="8.200"/><rect x="826.700" y="486.500" width="3.500" height="17.500"/>
<rect x="826" y="443" width="5" height="3.500"/>
<rect x="729.500" y="466.200" width="32" height="5.200" fill="#c2c2c2"/><rect x="777.200" y="466.200" width="31.500" height="5.200" fill="#c2c2c2"/>
<rect x="777.800" y="534.5" width="7.900" height="3.800" fill="#bdbdbd"/>
<rect x="777.800" y="539.5" width="7.900" height="3.800" fill="#bdbdbd"/>
<rect x="777.800" y="544.6" width="7.900" height="3.800" fill="#bdbdbd"/>
<rect x="777.800" y="549.6" width="7.900" height="3.800" fill="#bdbdbd"/>
<rect x="777.800" y="554.7" width="7.900" height="3.800" fill="#bdbdbd"/>
<rect x="777.800" y="559.8" width="7.900" height="3.800" fill="#bdbdbd"/>
<rect x="777.800" y="564.8" width="7.900" height="3.800" fill="#bdbdbd"/>
<rect x="777.800" y="569.9" width="7.900" height="3.800" fill="#bdbdbd"/>
<path d="M797 553q-3.500 0-3.500-4 0-4 4-9 1.500 3 1.500 6 1-5 2.500-9 2 5 2 10 0 6-6.500 6z" fill="#c4c4c4"/>
<rect x="753.400" y="505.800" width="16.300" height="2.200" fill="#d0d0d0"/><rect x="753.400" y="432.500" width="16.300" height="2" fill="#d0d0d0"/>
</g>
<g fill="none" stroke="#9a9a9a" stroke-width="1">
<circle cx="730.700" cy="435.200" r="2"/><circle cx="802.300" cy="575.500" r="2.200"/><circle cx="731" cy="503" r="1.800"/>
<path d="M772.400 386.600H788.300V409H772.400ZM777.700 386.600V409M783 386.600V409M772.400 392.200H788.300M772.400 397.800H788.300M772.400 403.400H788.300" stroke="#a8a8a8" stroke-width=".7"/>
</g>
<g fill="#808080" stroke="none" opacity=".78">
<rect x="767.90" y="518.600" width="1.300" height="2.900"/>
<rect x="770.45" y="518.600" width="1.300" height="2.900"/>
<rect x="773.00" y="518.600" width="1.300" height="2.900"/>
<rect x="775.55" y="518.600" width="1.300" height="2.900"/>
<rect x="778.10" y="518.600" width="1.300" height="2.900"/>
<rect x="780.65" y="518.600" width="1.300" height="2.900"/>
<rect x="783.20" y="518.600" width="1.300" height="2.900"/>
<rect x="785.75" y="518.600" width="1.300" height="2.900"/>
<rect x="788.30" y="518.600" width="1.300" height="2.900"/>
<rect x="790.85" y="518.600" width="1.300" height="2.900"/>
<rect x="793.40" y="518.600" width="1.300" height="2.900"/>
<rect x="795.95" y="518.600" width="1.300" height="2.900"/>
<rect x="798.50" y="518.600" width="1.300" height="2.900"/>
<rect x="801.05" y="518.600" width="1.300" height="2.900"/>
<rect x="940.90" y="417.100" width="1.500" height="2.700"/>
<rect x="943.40" y="417.100" width="1.500" height="2.700"/>
<rect x="945.90" y="417.100" width="1.500" height="2.700"/>
<rect x="948.40" y="417.100" width="1.500" height="2.700"/>
<rect x="950.90" y="417.100" width="1.500" height="2.700"/>
<rect x="953.40" y="417.100" width="1.500" height="2.700"/>
<rect x="955.90" y="417.100" width="1.500" height="2.700"/>
<rect x="958.40" y="417.100" width="1.500" height="2.700"/>
<rect x="866.5" y="543.6" width="2.6" height="1.0"/>
<rect x="862.2" y="552.9" width="1.0" height="2.6"/>
<rect x="862.0" y="552.2" width="1.0" height="2.6"/>
<rect x="868.4" y="541.7" width="1.0" height="2.6"/>
<rect x="868.2" y="559.8" width="1.0" height="2.6"/>
<rect x="864.8" y="555.1" width="2.6" height="1.0"/>
<rect x="870.8" y="549.5" width="2.6" height="1.0"/>
<rect x="861.8" y="560.6" width="1.0" height="2.6"/>
<rect x="863.5" y="542.8" width="1.0" height="2.6"/>
<rect x="874.9" y="544.3" width="2.6" height="1.0"/>
<rect x="871.9" y="548.9" width="2.6" height="1.0"/>
<rect x="862.1" y="541.4" width="1.0" height="2.6"/>
<rect x="872.6" y="550.3" width="1.0" height="2.6"/>
<rect x="871.0" y="550.9" width="1.0" height="2.6"/>
<rect x="874.5" y="556.8" width="1.0" height="2.6"/>
<rect x="870.8" y="552.6" width="2.6" height="1.0"/>
<rect x="873.4" y="546.9" width="2.6" height="1.0"/>
<rect x="863.0" y="550.0" width="2.6" height="1.0"/>
<rect x="863.6" y="551.7" width="1.0" height="2.6"/>
<rect x="872.4" y="558.3" width="2.6" height="1.0"/>
<rect x="875.9" y="547.5" width="2.6" height="1.0"/>
<rect x="871.1" y="553.9" width="1.0" height="2.6"/>
<rect x="875.3" y="562.7" width="1.0" height="2.6"/>
<rect x="872.3" y="541.5" width="2.6" height="1.0"/>
<rect x="872.0" y="563.8" width="2.6" height="1.0"/>
<rect x="865.8" y="549.3" width="2.6" height="1.0"/>
<rect x="861.4" y="551.1" width="1.0" height="2.6"/>
<rect x="863.0" y="541.4" width="2.6" height="1.0"/>
<rect x="863.2" y="545.9" width="1.0" height="2.6"/>
<rect x="875.8" y="541.9" width="1.0" height="2.6"/>
<rect x="870.3" y="561.2" width="2.6" height="1.0"/>
<rect x="875.7" y="546.7" width="1.0" height="2.6"/>
<rect x="867.1" y="561.2" width="2.6" height="1.0"/>
<rect x="863.6" y="544.2" width="1.0" height="2.6"/>
<rect x="865.0" y="551.6" width="2.6" height="1.0"/>
<rect x="865.5" y="540.1" width="1.0" height="2.6"/>
<rect x="867.3" y="553.6" width="2.6" height="1.0"/>
<rect x="872.7" y="552.4" width="2.6" height="1.0"/>
<rect x="872.5" y="541.3" width="2.6" height="1.0"/>
<rect x="874.3" y="561.0" width="2.6" height="1.0"/>
<rect x="867.7" y="549.6" width="1.0" height="2.6"/>
<rect x="871.8" y="541.5" width="1.0" height="2.6"/>
<rect x="864.5" y="543.9" width="1.0" height="2.6"/>
<rect x="861.9" y="540.0" width="1.0" height="2.6"/>
<rect x="862.7" y="548.7" width="1.0" height="2.6"/>
<rect x="875.9" y="554.7" width="1.0" height="2.6"/>
<rect x="865.3" y="548.3" width="1.0" height="2.6"/>
<rect x="863.1" y="560.4" width="2.6" height="1.0"/>
<rect x="868.9" y="551.6" width="1.0" height="2.6"/>
<rect x="862.7" y="548.2" width="1.0" height="2.6"/>
<rect x="875.1" y="543.9" width="1.0" height="2.6"/>
<rect x="877.2" y="552.7" width="1.0" height="2.6"/>
<rect x="828.8" y="530.7" width="2.6" height="1.0"/>
<rect x="836.4" y="537.5" width="2.6" height="1.0"/>
<rect x="823.9" y="533.5" width="1.0" height="2.6"/>
<rect x="832.8" y="534.8" width="2.6" height="1.0"/>
<rect x="825.1" y="532.3" width="2.6" height="1.0"/>
<rect x="836.5" y="537.4" width="2.6" height="1.0"/>
<rect x="833.6" y="536.5" width="1.0" height="2.6"/>
<rect x="828.4" y="533.4" width="1.0" height="2.6"/>
<rect x="819.8" y="532.8" width="1.0" height="2.6"/>
<rect x="831.4" y="538.2" width="1.0" height="2.6"/>
<rect x="835.7" y="538.5" width="2.6" height="1.0"/>
<rect x="825.7" y="532.3" width="1.0" height="2.6"/>
<rect x="822.7" y="532.2" width="2.6" height="1.0"/>
<rect x="835.1" y="537.3" width="1.0" height="2.6"/>
<rect x="823.7" y="550.6" width="1.0" height="2.6"/>
<rect x="823.8" y="551.9" width="2.6" height="1.0"/>
<rect x="824.4" y="546.7" width="1.0" height="2.6"/>
<rect x="824.6" y="545.0" width="2.6" height="1.0"/>
<rect x="825.8" y="545.8" width="1.0" height="2.6"/>
<rect x="825.7" y="549.7" width="1.0" height="2.6"/>
<rect x="820.9" y="560.2" width="2.6" height="1.0"/>
<rect x="825.6" y="560.1" width="2.6" height="1.0"/>
<rect x="826.9" y="570.8" width="1.0" height="2.6"/>
<rect x="823.8" y="559.8" width="1.0" height="2.6"/>
<rect x="826.8" y="570.6" width="2.6" height="1.0"/>
<rect x="826.5" y="566.1" width="2.6" height="1.0"/>
<rect x="825.8" y="561.4" width="1.0" height="2.6"/>
<rect x="844.4" y="559.1" width="2.6" height="1.0" fill="#999"/>
<rect x="843.7" y="562.1" width="1.0" height="2.6" fill="#999"/>
<rect x="858.0" y="561.0" width="1.0" height="2.6" fill="#999"/>
<rect x="850.8" y="570.4" width="1.0" height="2.6" fill="#999"/>
<rect x="858.2" y="563.5" width="2.6" height="1.0" fill="#999"/>
<rect x="849.5" y="555.3" width="1.0" height="2.6" fill="#999"/>
<rect x="842.0" y="555.1" width="2.6" height="1.0" fill="#999"/>
<rect x="841.8" y="563.0" width="2.6" height="1.0" fill="#999"/>
<rect x="850.2" y="560.5" width="2.6" height="1.0" fill="#999"/>
<rect x="850.2" y="568.3" width="1.0" height="2.6" fill="#999"/>
<rect x="940.4" y="487.7" width="1.0" height="2.6"/>
<rect x="946.0" y="491.9" width="2.6" height="1.0"/>
<rect x="945.7" y="498.6" width="1.0" height="2.6"/>
<rect x="941.8" y="491.9" width="2.6" height="1.0"/>
<rect x="943.9" y="491.0" width="2.6" height="1.0"/>
<rect x="938.2" y="499.0" width="2.6" height="1.0"/>
<rect x="948.7" y="499.1" width="1.0" height="2.6"/>
<rect x="940.4" y="499.1" width="2.6" height="1.0"/>
<rect x="929.2" y="485.6" width="1.0" height="2.6"/>
<rect x="927.5" y="487.5" width="1.0" height="2.6"/>
<rect x="943.3" y="496.5" width="2.6" height="1.0"/>
<rect x="929.7" y="495.3" width="2.6" height="1.0"/>
<rect x="929.4" y="498.1" width="2.6" height="1.0"/>
<rect x="931.4" y="499.2" width="1.0" height="2.6"/>
<rect x="938.5" y="499.8" width="2.6" height="1.0"/>
<rect x="929.9" y="490.7" width="2.6" height="1.0"/>
<rect x="934.6" y="486.8" width="1.0" height="2.6"/>
<rect x="944.7" y="483.9" width="2.6" height="1.0"/>
<rect x="937.2" y="483.9" width="1.0" height="2.6"/>
<rect x="942.1" y="492.0" width="1.0" height="2.6"/>
<rect x="951.6" y="496.5" width="2.6" height="1.0"/>
<rect x="928.4" y="488.0" width="1.0" height="2.6"/>
<rect x="950.0" y="509.2" width="1.0" height="2.6"/>
<rect x="946.8" y="524.0" width="2.6" height="1.0"/>
<rect x="945.3" y="506.4" width="2.6" height="1.0"/>
<rect x="948.1" y="519.1" width="1.0" height="2.6"/>
<rect x="943.5" y="518.8" width="1.0" height="2.6"/>
<rect x="943.7" y="524.6" width="2.6" height="1.0"/>
<rect x="950.2" y="504.9" width="2.6" height="1.0"/>
<rect x="943.6" y="522.8" width="1.0" height="2.6"/>
<rect x="946.1" y="515.7" width="2.6" height="1.0"/>
<rect x="945.4" y="506.0" width="2.6" height="1.0"/>
<rect x="945.1" y="505.5" width="1.0" height="2.6"/>
<rect x="943.5" y="507.6" width="1.0" height="2.6"/>
<rect x="829.8" y="604.5" width="1.1" height="3.2"/>
<rect x="835.0" y="602.2" width="1.1" height="3.2"/>
<rect x="822.1" y="602.5" width="1.1" height="3.2"/>
<rect x="841.2" y="603.7" width="1.1" height="3.2"/>
<rect x="834.3" y="605.2" width="1.1" height="3.2"/>
<rect x="843.5" y="603.2" width="1.1" height="3.2"/>
<rect x="844.0" y="603.1" width="3.2" height="1.1"/>
<rect x="840.0" y="605.4" width="1.1" height="3.2"/>
<rect x="843.9" y="604.3" width="3.2" height="1.1"/>
<rect x="832.4" y="602.9" width="1.1" height="3.2"/>
<rect x="825.1" y="601.8" width="3.2" height="1.1"/>
<rect x="828.4" y="602.2" width="1.1" height="3.2"/>
<rect x="899.4" y="593.7" width="2.6" height="1.0" fill="#999"/>
<rect x="886.8" y="590.1" width="1.0" height="2.6" fill="#999"/>
<rect x="890.8" y="589.6" width="1.0" height="2.6" fill="#999"/>
<rect x="886.3" y="594.3" width="2.6" height="1.0" fill="#999"/>
<rect x="892.8" y="590.1" width="2.6" height="1.0" fill="#999"/>
<rect x="887.4" y="590.8" width="1.0" height="2.6" fill="#999"/>
<rect x="889.0" y="591.5" width="2.6" height="1.0" fill="#999"/>
<rect x="884.9" y="591.6" width="1.0" height="2.6" fill="#999"/>
<rect x="886.4" y="589.2" width="1.0" height="2.6" fill="#999"/>
<rect x="881.3" y="588.8" width="1.0" height="2.6" fill="#999"/>
<rect x="890.6" y="602.8" width="2.6" height="1.0"/>
<rect x="899.0" y="603.0" width="2.6" height="1.0"/>
<rect x="901.0" y="602.4" width="1.0" height="2.6"/>
<rect x="902.8" y="601.8" width="2.6" height="1.0"/>
<rect x="897.2" y="601.6" width="2.6" height="1.0"/>
<rect x="912.2" y="591.6" width="2.9" height="1.1"/>
<rect x="911.7" y="590.2" width="2.9" height="1.1"/>
<rect x="909.5" y="592.2" width="2.9" height="1.1"/>
<rect x="911.8" y="591.5" width="2.9" height="1.1"/>
<rect x="944.0" y="599.0" width="1.1" height="3.2"/>
<rect x="939.4" y="596.7" width="1.1" height="3.2"/>
<rect x="939.9" y="599.6" width="3.2" height="1.1"/>
<rect x="943.6" y="598.8" width="3.2" height="1.1"/>
<rect x="942.4" y="603.0" width="3" height="1.1"/>
<rect x="944.2" y="604.5" width="3" height="1.1"/>
<rect x="943.6" y="603.2" width="3" height="1.1"/>
<rect x="917.2" y="583.1" width="1.0" height="2.6"/>
<rect x="921.9" y="583.6" width="2.6" height="1.0"/>
<rect x="924.4" y="584.8" width="1.0" height="2.6"/>
<rect x="919.4" y="585.6" width="2.6" height="1.0"/>
<rect x="920.8" y="585.4" width="1.0" height="2.6"/>
<rect x="916.2" y="583.8" width="2.6" height="1.0"/>
<rect x="954.1" y="569.3" width="1.1" height="2.8"/>
<rect x="952.4" y="568.5" width="2.8" height="1.1"/>
<rect x="956.8" y="569.7" width="1.1" height="2.8"/>
<rect x="955.6" y="569.0" width="1.1" height="2.8"/>
<rect x="967.9" y="570.3" width="1.1" height="2.8"/>
<rect x="988.9" y="570.4" width="1.1" height="2.8"/>
<rect x="976.2" y="570.0" width="2.8" height="1.1"/>
<rect x="976.0" y="568.3" width="1.1" height="2.8"/>
<rect x="988.1" y="568.1" width="2.8" height="1.1"/>
<rect x="968.5" y="569.1" width="2.8" height="1.1"/>
<rect x="968.2" y="570.0" width="2.8" height="1.1"/>
<rect x="986.6" y="569.7" width="1.1" height="2.8"/>
<rect x="986.9" y="569.0" width="1.1" height="2.8"/>
<rect x="965.1" y="569.0" width="1.1" height="2.8"/>
<rect x="972.4" y="567.9" width="1.1" height="2.8"/>
<rect x="972.7" y="570.1" width="1.1" height="2.8"/>
<rect x="1014.4" y="570.1" width="1.1" height="2.8"/>
<rect x="1018.3" y="569.7" width="2.8" height="1.1"/>
<rect x="1004.0" y="568.6" width="1.1" height="2.8"/>
<rect x="1020.0" y="569.3" width="1.1" height="2.8"/>
<rect x="1007.1" y="568.3" width="1.1" height="2.8"/>
<rect x="999.8" y="570.1" width="1.1" height="2.8"/>
<rect x="1018.6" y="568.2" width="1.1" height="2.8"/>
<rect x="1009.0" y="568.0" width="1.1" height="2.8"/>
<rect x="1019.0" y="570.2" width="2.8" height="1.1"/>
<rect x="1011.7" y="570.3" width="2.8" height="1.1"/>
<rect x="1009.9" y="569.7" width="1.1" height="2.8"/>
<rect x="1014.0" y="568.8" width="2.8" height="1.1"/>
<rect x="1026.6" y="546.6" width="3" height="1.2" fill="#aaa"/>
<rect x="1027.5" y="544.8" width="3" height="1.2" fill="#aaa"/>
<rect x="1025.5" y="546.8" width="1.2" height="3" fill="#aaa"/>
<rect x="1027.7" y="546.3" width="1.2" height="3" fill="#aaa"/>
<rect x="1025.4" y="549.8" width="3" height="1.2" fill="#aaa"/>
<rect x="1024.9" y="545.2" width="3" height="1.2" fill="#aaa"/>
<rect x="1030.3" y="525.5" width="1.0" height="2.6" fill="#999"/>
<rect x="1030.3" y="530.0" width="1.0" height="2.6" fill="#999"/>
<rect x="1025.0" y="522.7" width="1.0" height="2.6" fill="#999"/>
<rect x="1026.4" y="521.8" width="1.0" height="2.6" fill="#999"/>
<rect x="1025.8" y="526.1" width="2.6" height="1.0" fill="#999"/>
<rect x="1029.2" y="524.7" width="1.0" height="2.6" fill="#999"/>
<rect x="1026.1" y="559.8" width="1.0" height="2.6"/>
<rect x="1024.2" y="558.8" width="2.6" height="1.0"/>
<rect x="1024.5" y="561.0" width="2.6" height="1.0"/>
<rect x="1038.0" y="458.2" width="1.0" height="2.6" fill="#999"/>
<rect x="1035.5" y="465.2" width="1.0" height="2.6" fill="#999"/>
<rect x="1038.3" y="482.2" width="2.6" height="1.0" fill="#999"/>
<rect x="1034.6" y="451.2" width="2.6" height="1.0" fill="#999"/>
<rect x="1038.1" y="468.0" width="2.6" height="1.0" fill="#999"/>
<rect x="1034.5" y="464.9" width="2.6" height="1.0" fill="#999"/>
<rect x="1037.8" y="482.5" width="2.6" height="1.0" fill="#999"/>
<rect x="1035.5" y="454.1" width="1.0" height="2.6" fill="#999"/>
<rect x="1036.6" y="475.9" width="2.6" height="1.0" fill="#999"/>
<rect x="1037.4" y="474.6" width="2.6" height="1.0" fill="#999"/>
<rect x="1036.3" y="471.0" width="1.0" height="2.6" fill="#999"/>
<rect x="1037.6" y="458.8" width="2.6" height="1.0" fill="#999"/>
<rect x="1023.7" y="411.6" width="1.0" height="2.6" fill="#999"/>
<rect x="1016.4" y="413.1" width="2.6" height="1.0" fill="#999"/>
<rect x="1013.8" y="410.5" width="2.6" height="1.0" fill="#999"/>
<rect x="1022.5" y="412.0" width="1.0" height="2.6" fill="#999"/>
<rect x="1022.9" y="410.2" width="1.0" height="2.6" fill="#999"/>
<rect x="1020.3" y="414.6" width="2.6" height="1.0" fill="#999"/>
<rect x="1028.1" y="412.4" width="1.0" height="2.6" fill="#999"/>
<rect x="1016.3" y="414.6" width="2.6" height="1.0" fill="#999"/>
<rect x="1014.0" y="418.6" width="1.0" height="2.6" fill="#999"/>
<rect x="1019.6" y="423.9" width="1.0" height="2.6" fill="#999"/>
<rect x="1019.5" y="430.7" width="1.0" height="2.6" fill="#999"/>
<rect x="1009.9" y="422.8" width="1.0" height="2.6" fill="#999"/>
<rect x="1019.7" y="421.0" width="2.6" height="1.0" fill="#999"/>
<rect x="1020.6" y="425.1" width="1.0" height="2.6" fill="#999"/>
<rect x="1024.0" y="422.5" width="2.6" height="1.0" fill="#999"/>
<rect x="1012.9" y="421.3" width="2.6" height="1.0" fill="#999"/>
<rect x="1013.9" y="431.1" width="1.0" height="2.6" fill="#999"/>
<rect x="1012.2" y="421.3" width="1.0" height="2.6" fill="#999"/>
<rect x="851.7" y="424.9" width="1.0" height="2.6"/>
<rect x="849.6" y="419.3" width="2.6" height="1.0"/>
<rect x="847.7" y="418.1" width="1.0" height="2.6"/>
<rect x="849.6" y="424.5" width="2.6" height="1.0"/>
<rect x="845.6" y="446.2" width="2.6" height="1.0"/>
<rect x="842.4" y="437.6" width="2.6" height="1.0"/>
<rect x="845.7" y="436.0" width="2.6" height="1.0"/>
<rect x="842.8" y="439.6" width="1.0" height="2.6"/>
<rect x="841.1" y="435.7" width="1.0" height="2.6"/>
<rect x="842.5" y="445.7" width="1.0" height="2.6"/>
<rect x="850.3" y="462.0" width="1.0" height="2.6"/>
<rect x="848.7" y="467.4" width="1.0" height="2.6"/>
<rect x="840.2" y="464.4" width="1.0" height="2.6"/>
<rect x="849.8" y="461.9" width="1.0" height="2.6"/>
<rect x="849.6" y="460.5" width="1.0" height="2.6"/>
<rect x="848.6" y="466.9" width="1.0" height="2.6"/>
<rect x="840.1" y="490.5" width="2.6" height="1.0"/>
<rect x="842.5" y="506.9" width="2.6" height="1.0"/>
<rect x="843.4" y="495.5" width="2.6" height="1.0"/>
<rect x="846.5" y="495.3" width="2.6" height="1.0"/>
<rect x="843.2" y="495.6" width="1.0" height="2.6"/>
<rect x="848.0" y="511.0" width="2.6" height="1.0"/>
<rect x="850.1" y="489.6" width="1.0" height="2.6"/>
<rect x="844.9" y="512.0" width="2.6" height="1.0"/>
<rect x="844.0" y="495.0" width="1.0" height="2.6"/>
<rect x="845.1" y="511.3" width="1.0" height="2.6"/>
<rect x="848.5" y="506.7" width="2.6" height="1.0"/>
<rect x="848.2" y="503.6" width="1.0" height="2.6"/>
<rect x="917.5" y="536.1" width="2.6" height="1.0" fill="#aaa"/>
<rect x="914.9" y="533.8" width="2.6" height="1.0" fill="#aaa"/>
<rect x="916.7" y="531.9" width="1.0" height="2.6" fill="#aaa"/>
<rect x="920.1" y="535.6" width="2.6" height="1.0" fill="#aaa"/>
<rect x="923.7" y="544.8" width="1.0" height="2.6" fill="#aaa"/>
<rect x="931.5" y="548.7" width="1.0" height="2.6" fill="#aaa"/>
<rect x="942.8" y="562.0" width="1.0" height="2.6" fill="#aaa"/>
<rect x="937.5" y="568.6" width="2.6" height="1.0" fill="#aaa"/>
<rect x="943.5" y="577.2" width="2.6" height="1.0" fill="#aaa"/>
<rect x="932.2" y="577.0" width="1.0" height="2.6" fill="#aaa"/>
<rect x="940.2" y="559.2" width="2.6" height="1.0" fill="#aaa"/>
<rect x="933.6" y="554.4" width="1.0" height="2.6" fill="#aaa"/>
<rect x="932.8" y="578.6" width="2.6" height="1.0" fill="#aaa"/>
<rect x="935.9" y="560.1" width="2.6" height="1.0" fill="#aaa"/>
<rect x="939.1" y="553.8" width="2.6" height="1.0" fill="#aaa"/>
<rect x="941.8" y="582.7" width="1.0" height="2.6" fill="#aaa"/>
<rect x="938.5" y="576.1" width="2.6" height="1.0" fill="#aaa"/>
<rect x="973.1" y="580.9" width="1.0" height="2.6" fill="#999"/>
<rect x="964.3" y="584.2" width="2.6" height="1.0" fill="#999"/>
<rect x="969.4" y="600.5" width="1.0" height="2.6" fill="#999"/>
<rect x="972.5" y="589.9" width="1.0" height="2.6" fill="#999"/>
<rect x="971.6" y="600.8" width="1.0" height="2.6" fill="#999"/>
<rect x="969.6" y="593.6" width="1.0" height="2.6" fill="#999"/>
<rect x="994.9" y="582.8" width="1.0" height="2.6" fill="#999"/>
<rect x="994.0" y="592.0" width="2.6" height="1.0" fill="#999"/>
<rect x="993.6" y="580.2" width="1.0" height="2.6" fill="#999"/>
<rect x="997.4" y="583.7" width="1.0" height="2.6" fill="#999"/>
<rect x="993.6" y="595.9" width="2.6" height="1.0" fill="#999"/>
<rect x="1013.6" y="581.0" width="1.0" height="2.6" fill="#999"/>
<rect x="1018.0" y="586.4" width="1.0" height="2.6" fill="#999"/>
<rect x="1014.5" y="587.0" width="1.0" height="2.6" fill="#999"/>
<rect x="1015.5" y="583.1" width="2.6" height="1.0" fill="#999"/>
<rect x="885.3" y="537.2" width="1.0" height="2.6" fill="#aaa"/>
<rect x="887.1" y="540.5" width="2.6" height="1.0" fill="#aaa"/>
<rect x="886.2" y="533.2" width="2.6" height="1.0" fill="#aaa"/>
<rect x="883.5" y="531.1" width="2.6" height="1.0" fill="#aaa"/>
<rect x="887.2" y="540.0" width="1.0" height="2.6" fill="#aaa"/>
<rect x="984.5" y="454" width="2.5" height="1"/>
<rect x="1000.5" y="453.5" width="3" height="1.2"/>
<rect x="1008.5" y="459" width="3" height="1"/>
<rect x="985" y="470" width="2.5" height="1"/>
<rect x="1001.3" y="467" width="1" height="3"/>
<rect x="1015.5" y="467.5" width="2.5" height="1"/>
<rect x="985.5" y="482" width="3" height="1.2"/>
<rect x="1011" y="481.5" width="1.5" height="1.5"/>
<rect x="1015.5" y="479" width="2.5" height="1"/>
<rect x="1015.5" y="484" width="2.5" height="1"/>
<rect x="972" y="521" width="3" height="1"/>
<rect x="985.5" y="531.7" width="3.5" height="1"/>
<rect x="1009.3" y="526.5" width="1" height="3.5"/>
<rect x="1008" y="540.7" width="3.5" height="1"/>
<rect x="973" y="545.5" width="1" height="3.5"/>
<rect x="971.3" y="549" width="1" height="3.5"/>
<rect x="974.2" y="557.5" width="1" height="6.5"/>
<rect x="897" y="563.5" width="1.5" height="1.5"/>
<rect x="944.4" y="473" width="1" height="2.6"/>
<rect x="947.3" y="466.5" width="1" height="2.6"/>
<rect x="947.3" y="470.2" width="2.6" height="1"/>
<rect x="952.6" y="469" width="1" height="2.6"/>
<rect x="960.2" y="463.5" width="1" height="3"/>
<rect x="957.8" y="489.3" width="1" height="2.6"/>
<rect x="962.5" y="486.3" width="1" height="2.6"/>
<rect x="966" y="488.1" width="1" height="2.6"/>
<rect x="968.9" y="485.7" width="1" height="2.6"/>
<rect x="967.7" y="492.7" width="1" height="2.6"/>
<rect x="864" y="388" width="1" height="3"/>
<rect x="864" y="406.5" width="1" height="3"/>
<rect x="915.8" y="388" width="1" height="3.5"/>
<rect x="915.8" y="406.5" width="1" height="3.5"/>
<rect x="952.5" y="398" width="1.2" height="2.5"/>
<rect x="756.3" y="410.1" width="1.2" height="2.6"/>
<rect x="758.5" y="410.1" width="1.2" height="2.6"/>
<rect x="760.7" y="410.1" width="1.2" height="2.6"/>
<rect x="770.2" y="474.5" width="1.2" height="2.6"/>
<rect x="779.5" y="397.5" width="1.2" height="2.5"/>
</g>
<g fill="none" stroke="#a2a2cc" stroke-width="1.100" stroke-linejoin="round">
<path d="M723.400 405.500Q723.400 402.200 726.500 402.200H735.300Q742.300 401.500 742.300 394.500V384.500Q742.300 381.400 745.500 381.400H765.600L768.500 378.800H795Q797.600 378.800 797.600 381.500V418.500Q797.600 422.100 801 422.100H836.500Q839.600 422.100 839.600 419V383Q839.600 380.200 842.500 380.200H947.300Q947.300 384.500 949.400 384.500Q951.400 384.500 951.400 380.200H973.300V431.100H997.700V379.800H1031Q1045.500 381 1045.500 394V403.200H1041Q1037.300 404 1037.300 407.500Q1037.300 411.500 1041 412H1045.500V463.800L1048.800 467.300V493.500L1045.600 497V598L1042.500 600.500V609.500Q1042.500 612.500 1039.500 612.500H755.100V607.900A3.500 3.500 0 0 0 748.100 607.900V612.500H745Q742.300 612.500 742.300 610V603Q742.300 599.400 738.800 599.400H726.500Q723.400 599.400 723.400 596.200Z"/>
<path d="M865.500 418.900H905.500Q908.500 418.900 908.500 421.500V424Q908.500 427 911.500 427.200Q914.200 427.400 914.200 430V453.500Q914.200 456 911.500 456.300Q908.500 456.500 908.500 459.500V461Q908.500 463.400 905.500 463.400H865.500Q862.900 463.400 862.900 460.800V421.500Q862.900 418.900 865.500 418.900Z"/>
<path d="M862.500 472.500H908Q911.200 472.500 911.200 475.500V479Q911.200 483 914.500 483.500Q917.500 484 917.500 487V514.500Q917.500 517.500 914.500 518Q911.500 518.500 911.500 521V521Q911.500 523 908.500 523H862.500Q859.500 523 859.500 520V475.500Q859.500 472.500 862.500 472.500Z"/>
</g>
<g fill="none" stroke="#1c1c1c" stroke-width=".9">
<circle cx="1014.400" cy="395.900" r="7.200"/>
<path d="M959.300 379.400H973.300M997.700 379.400H1011.700" stroke-width="1.700" stroke="#444"/>
<path d="M968 419.500V430.600H973.300M1002.400 419.500V430.600H997.700" stroke-width="1.500" stroke="#333"/>
<path d="M748.100 415.700L762.700 416.500V423L758 425.300L748.100 423.500Z" fill="#e6e6e6"/><path d="M753 417V423M757 417.500V422.500" stroke="#777" stroke-width=".7"/>
<rect x="843.300" y="410.200" width="9" height="5.200" fill="#cfcfcf" stroke-width="1.300"/>
<path d="M841.200 478H851V487.300H845L841.200 485.500Z" fill="#f2f2f2"/><rect x="849" y="479.500" width="6" height="7" rx="2" stroke="#999" stroke-width=".7" fill="#e0e0e0"/>
<path d="M1026 420H1034.400V429.400H1026M1026 424.700H1034.400M1034.400 420V429.400" /><path d="M1025 423l2 1.500M1025 427.500l2 -1" stroke-width="1.400"/>
<path d="M1038 420.500H1044Q1047 424 1045.500 428.500L1041.500 434.500L1037.500 431.200L1044 430.800" stroke-width="1"/><rect x="1038.500" y="421" width="5" height="9" fill="#d8d8d8" stroke="none"/>
<path d="M760.500 599.500Q764 597.500 768.400 599V608.800L761.500 608.500Q758.500 605 760.500 599.500Z" fill="#e4e4e4"/><rect x="762.500" y="602" width="4.500" height="5.500" fill="#cfcfcf" stroke="#888" stroke-width=".6"/>
<path d="M774.500 603Q779 600.500 785.500 604V610L776 609.500Q773.500 606.500 774.500 603Z" fill="#dedede"/><rect x="776.500" y="604" width="6.500" height="4.800" fill="#cfcfcf" stroke="#888" stroke-width=".6"/>
<path d="M826.300 582V579.300H829M842.800 579.300H845.500V582M845.500 596V598.600H842.800M829 598.600H826.300V596" stroke-width="1.400"/>
<path d="M830 579.800H842M830 598.200H842M826.800 583V595M845 583V595" stroke="#aaa" stroke-width="1" stroke-dasharray="1 1"/>
<path d="M869.600 572V577.500M876.200 572V577.500" stroke-width="1.500"/>
<path d="M974.800 583.200H979M986 583.200H990M974.800 597.600H979M986 597.600H990" stroke-width="1.400" stroke="#333"/>
<path d="M977 585V596M988 585V596" stroke="#bbb" stroke-width="1.600"/>
<circle cx="987.800" cy="600.700" r="1.700" stroke-width="1.300"/>
</g>
<g fill="#111">
<circle cx="790.900" cy="388.400" r="1.400"/><circle cx="867.600" cy="583.800" r="1.300"/><circle cx="963.400" cy="608.100" r="1.200"/>
<rect x="741" y="412.900" width="2.200" height="2.200"/><path d="M757.800 398.500l1 1.500l-1 1.500l-1-1.500z"/><rect x="822.600" y="582.300" width="2" height="3.500"/>
</g>
</svg>

<!-- viewer vscroll -->
<div class="abs" style="left:1506px;top:161px;width:14px;height:673px;background:#fff;border-top:1px solid #c4c4c4"></div>
<div class="abs" style="left:1506px;top:179px;width:14px;height:318px;background:#dcdcdc"></div>
<div class="abs" style="left:1506px;top:178px;width:14px;height:1px;background:#b4b4b4"></div>
<div class="abs" style="left:1506px;top:497px;width:14px;height:1px;background:#c8c8c8"></div>
<div class="abs" style="left:1506px;top:820px;width:14px;height:1px;background:#c8c8c8"></div>
<svg class="abs" style="left:1509px;top:167px" width="9" height="7" viewBox="0 0 9 7"><path d="M1 5.500L4.500 1.800L8 5.500" fill="none" stroke="#505050" stroke-width="1.300"/></svg>
<svg class="abs" style="left:1509px;top:824px" width="9" height="7" viewBox="0 0 9 7"><path d="M1 1.500L4.500 5.200L8 1.500" fill="none" stroke="#505050" stroke-width="1.300"/></svg>
<div class="abs" style="left:1510px;top:334px;width:7px;height:2px;background:#5a5a5a;box-shadow:0 3px 0 #5a5a5a,0 6px 0 #5a5a5a"></div>

<div class="abs" id="lpborder"></div>
<div class="abs" id="status"></div>

<div class="abs mono" style="left:0;top:841px;color:#fff"><i class="c"><b class="k7">V</b></i><i class="c">e</i><i class="c">r</i><i class="c">s</i><i class="c">i</i><i class="c">o</i><i class="c">n</i><i class="c">:</i>1<i class="c">.</i>0<i class="c">.</i>0<i class="c">.</i>52</div>
<div class="abs mono" style="left:1207px;top:841px;color:#fff"><i class="c"><b class="k6">C</b></i><i class="c">u</i><i class="c">r</i><i class="c">r</i><i class="c">e</i><i class="c">n</i><i class="c">t</i><i class="c"> </i><i class="c">[</i><i class="c"><b class="k7">X</b></i><i class="c"><b class="k6">T</b></i>1902<i class="c"><b class="dash">–</b></i>3<i class="c">_</i><i class="c">I</i><i class="c">n</i><i class="c">d</i><i class="c">r</i><i class="c">i</i><i class="c">y</i><i class="c">a</i><i class="c">_</i><i class="c"><b class="k5">P</b></i><i class="c">r</i><i class="c">o</i><i class="c">_</i><i class="c"><b class="k9">M</b></i><i class="c"><b class="k6">B</b></i><i class="c">_</i><i class="c"><b class="k6">C</b></i><i class="c">o</i><i class="c"><b class="k7">m</b></i><i class="c">p</i><i class="c">o</i><i class="c">n</i><i class="c">e</i><i class="c">n</i><i class="c">t</i><i class="c">_</i><i class="c"><b class="k6">L</b></i><i class="c">o</i><i class="c">c</i><i class="c">a</i><i class="c">t</i><i class="c">i</i><i class="c">o</i><i class="c">n</i><i class="c">]</i></div>
<div class="abs" style="left:0;top:834px;width:1520px;height:3px;background:linear-gradient(180deg,#f4faff 0,#f0f8ff 66%,#b9cfe0 100%)"></div>

</div>
</body>
</html>
